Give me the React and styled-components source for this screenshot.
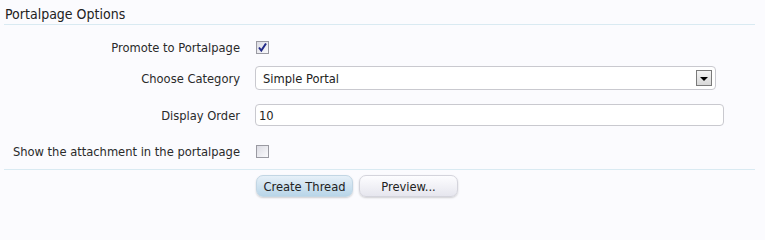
import styled, { createGlobalStyle } from 'styled-components';

const GlobalStyle = createGlobalStyle`
  html, body {
    margin: 0;
    background: #fbfbfe;
    font-family: 'DejaVu Sans Condensed', 'DejaVu Sans', sans-serif;
    color: #222;
  }
`;

function App() {
  return (
    <>
      <GlobalStyle />
      <Page>
        <Heading>Portalpage Options</Heading>

        <Row $top={10}>
          <Label>Promote to Portalpage</Label>
          <Check $checked>
            <svg width="11" height="11" viewBox="0 0 11 11">
              <path d="M2 5.5 L4.3 8.5 L9 1.5" fill="none" stroke="#222a88" strokeWidth="2" />
            </svg>
          </Check>
        </Row>

        <Row $top={7}>
          <Label>Choose Category</Label>
          <Select>
            <span>Simple Portal</span>
            <Arrow />
          </Select>
        </Row>

        <Row $top={14} $height={22}>
          <Label>Display Order</Label>
          <Input>10</Input>
        </Row>

        <Row $top={13}>
          <Label>Show the attachment in the portalpage</Label>
          <Check />
        </Row>

        <Footer>
          <Button $primary>Create Thread</Button>
          <Button>Preview...</Button>
        </Footer>
      </Page>
    </>
  );
}

export default App;

const Page = styled.div`
  width: 765px;
  height: 207px;
  box-sizing: border-box;
  padding: 0 10px 0 4px;
  font-size: 12.8px;
  overflow: hidden;
`;

const Heading = styled.div`
  height: 25px;
  box-sizing: border-box;
  padding: 6px 0 0 1px;
  font-size: 14px;
  border-bottom: 1px solid #d9eaf2;
`;

const Row = styled.div`
  display: flex;
  align-items: center;
  height: ${(p) => p.$height || 24}px;
  margin-top: ${(p) => p.$top}px;
`;

const Label = styled.div`
  width: 236px;
  text-align: right;
  flex-shrink: 0;
  margin-right: 15px;
  color: #2a2a2a;
`;

const Check = styled.span`
  width: 11px;
  height: 11px;
  margin-left: 1px;
  border: 1px solid #9a9aa2;
  background: linear-gradient(135deg, #dcdce4, #fafafc);
  display: flex;
  align-items: center;
  justify-content: center;
  svg {
    display: ${(p) => (p.$checked ? 'block' : 'none')};
  }
`;

const Select = styled.div`
  width: 461px;
  height: 24px;
  box-sizing: border-box;
  border: 1px solid #c9c9cf;
  border-radius: 4px;
  background: #fff;
  display: flex;
  align-items: center;
  justify-content: space-between;
  padding: 0 3px 0 7px;
`;

const Arrow = styled.span`
  width: 16px;
  height: 16px;
  box-sizing: border-box;
  border: 1px solid #7a7a7a;
  background: linear-gradient(#f4f4f4, #d8d8d8);
  display: flex;
  align-items: center;
  justify-content: center;
  &::after {
    content: '';
    border-left: 4px solid transparent;
    border-right: 4px solid transparent;
    border-top: 4px solid #000;
    margin-top: 1px;
  }
`;

const Input = styled.div`
  width: 469px;
  height: 22px;
  box-sizing: border-box;
  border: 1px solid #c9c9cf;
  border-radius: 4px;
  background: #fff;
  display: flex;
  align-items: center;
  padding-left: 3px;
`;

const Footer = styled.div`
  margin-top: 6px;
  border-top: 1px solid #d9eaf2;
  padding: 5px 0 0 252px;
  display: flex;
  gap: 6px;
`;

const Button = styled.div`
  width: ${(p) => (p.$primary ? 97 : 99)}px;
  height: 22px;
  box-sizing: border-box;
  border: 1px solid ${(p) => (p.$primary ? '#c2d6e4' : '#d4d4dc')};
  border-radius: 7px;
  background: ${(p) =>
    p.$primary
      ? 'linear-gradient(#e6f0f8, #b8d5e8)'
      : 'linear-gradient(#fdfdff, #e6e6ee)'};
  box-shadow: 0 1px 2px rgba(0, 0, 0, 0.18);
  display: flex;
  align-items: center;
  justify-content: center;
  color: #222;
`;
